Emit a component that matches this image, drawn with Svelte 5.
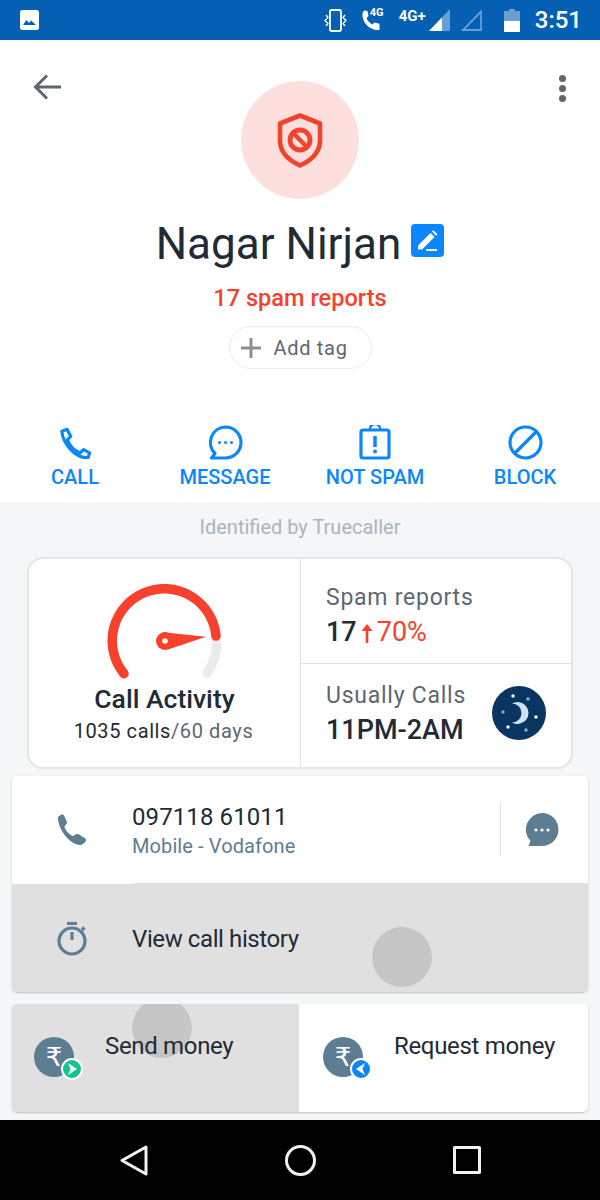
<script>
  const actions = [
    { label: 'CALL', kind: 'call' },
    { label: 'MESSAGE', kind: 'message' },
    { label: 'NOT SPAM', kind: 'spam' },
    { label: 'BLOCK', kind: 'block' }
  ];
</script>

<div class="screen">
  <header class="status">
    <svg class="st-img" width="19" height="20" viewBox="0 0 19 20"><rect width="19" height="20" rx="2.5" fill="#fff"/><path d="M3 15l3.5-5 2.5 3 2-2.5 5 4.500z" fill="#0560b4"/></svg>
    <div class="st-right">
      <svg class="st-vib" width="25" height="23" viewBox="0 0 25 23" fill="none" stroke="#fff" stroke-width="1.800"><rect x="7" y="1" width="11" height="21" rx="1.500"/><path d="M3 6l2 2.500-3 3 3 3-2 2.500M22 6l-2 2.500 3 3-3 3 2 2.500" stroke-width="1.300"/></svg>
      <span class="st-call">
        <svg width="20" height="21" viewBox="0 0 20 21"><path d="M3 0.500l3.500.500 1 5-2 2c1 3 3 5 6 6.500l2-2 5 1.200V20c-10 1-18-8-17-17z" fill="#fff"/></svg>
        <span class="st-4g">4G</span>
      </span>
      <span class="st-4gp">4G+</span>
      <svg class="st-sig1" width="21" height="22" viewBox="0 0 21 22"><path d="M21 0v22H0z" fill="#fff" opacity=".4"/><path d="M13 8.500V22H0z" fill="#fff"/></svg>
      <svg class="st-sig2" width="21" height="22" viewBox="0 0 21 22" fill="none" stroke="#fff" stroke-opacity=".4" stroke-width="1.800"><path d="M20 2.500V21H2z"/></svg>
      <svg class="st-bat" width="16" height="23" viewBox="0 0 16 23"><path d="M5 0h6v2h5v10H0V2h5z" fill="#fff" opacity=".4"/><rect y="12" width="16" height="11" fill="#fff"/></svg>
      <span class="st-time">3:51</span>
    </div>
  </header>

  <section class="hero">
    <div class="top">
      <button class="icon-btn back" aria-label="Back">
        <svg width="28" height="26" viewBox="0 0 28 26" fill="none" stroke="#5d6770" stroke-width="3"><path d="M28 13H3M14 1.500L2.500 13 14 24.500"/></svg>
      </button>
      <div class="avatar">
        <svg width="46" height="55" viewBox="0 0 46 55" fill="none" stroke="#f4432c">
          <path d="M23 2.500l20 8v17c0 12-9 20-20 25C12 47.500 3 39.500 3 27.500v-17z" stroke-width="4.600" stroke-linejoin="round"/>
          <circle cx="23" cy="27" r="10" stroke-width="4.800"/>
          <path d="M16 20l14 14" stroke-width="4.500"/>
        </svg>
      </div>
      <button class="icon-btn more" aria-label="More">
        <i></i><i></i><i></i>
      </button>
    </div>

    <div class="name-row">
      <h1>Nagar Nirjan</h1>
      <span class="edit">
        <svg width="23" height="23" viewBox="0 0 23 23"><path d="M2 16.500L14.500 4l4 4L6 20.500H2zM16 2.500l1.500-1.200 4 4-1.500 1.500z" fill="#fff"/><path d="M10 21h11" stroke="#fff" stroke-width="2"/></svg>
      </span>
    </div>
    <p class="reports">17 spam reports</p>
    <div class="pill">
      <svg width="20" height="20" viewBox="0 0 20 20"><path d="M10 0v20M0 10h20" stroke="#8b9095" stroke-width="3"/></svg>
      <span>Add tag</span>
    </div>

    <nav class="actions">
      {#each actions as a}
        <div class="action">
          <span class="action-icon">
            {#if a.kind === 'call'}
              <svg width="32" height="32" viewBox="0 0 34 34" fill="none" stroke="#0a87ff" stroke-width="3.400" stroke-linejoin="round"><path d="M3 4.500L8.500 2.500 12.500 10 9 13.500C11 19.500 16 25 22.500 27.500L26 24 32.500 27.500 31 32.500 C18 34 4 18 3 4.500z"/></svg>
            {:else if a.kind === 'message'}
              <svg width="35" height="35" viewBox="0 0 35 35" fill="none" stroke="#0a87ff" stroke-width="3.200"><path d="M17.500 2a15.500 15.500 0 1 1 0 31H3.500l3.500-4.500A15.500 15.500 0 0 1 17.500 2z" stroke-linejoin="round"/><g fill="#0a87ff" stroke="none"><circle cx="11.500" cy="17.500" r="1.500"/><circle cx="17.500" cy="17.500" r="1.500"/><circle cx="23.500" cy="17.500" r="1.500"/></g></svg>
            {:else if a.kind === 'spam'}
              <svg width="32" height="35" viewBox="0 0 32 35" fill="none" stroke="#0a87ff" stroke-width="3.200"><path d="M11 5V4a5 5 0 0 1 10 0v1" stroke-width="2.500"/><rect x="2" y="5" width="28" height="28" rx="2"/><path d="M16 11v11" stroke-width="3.500"/><circle cx="16" cy="26.500" r="2" fill="#0a87ff" stroke="none"/></svg>
            {:else}
              <svg width="35" height="35" viewBox="0 0 35 35" fill="none" stroke="#0a87ff" stroke-width="3.200"><circle cx="17.500" cy="17.500" r="15.500"/><path d="M6.500 28.500l22-22"/></svg>
            {/if}
          </span>
          <span class="action-label">{a.label}</span>
        </div>
      {/each}
    </nav>
  </section>

  <main class="body">
    <p class="identified">Identified by Truecaller</p>

    <section class="stats">
      <div class="activity">
        <svg class="gauge" width="116" height="94" viewBox="0 0 116 94" fill="none" stroke-width="9.500" stroke-linecap="round">
          <path d="M109 50A52 52 0 0 1 100 87" stroke="#ebebeb"/>
          <path d="M17 87.700A52 52 0 1 1 109 50" stroke="#f7412d"/>
          <circle cx="58" cy="55" r="9" fill="#f7412d" stroke="none"/>
          <path d="M56 46.200L99 50.700 61 63.500z" fill="#f7412d" stroke="none"/>
          <circle cx="58" cy="55" r="2.800" fill="#fff" stroke="none"/>
        </svg>
        <h2>Call Activity</h2>
        <p class="calls">1035 calls<span>/60 days</span></p>
      </div>
      <div class="side">
        <div class="cell">
          <p class="cell-label">Spam reports</p>
          <p class="cell-value">17<svg class="up" width="12" height="20" viewBox="0 0 12 20"><path d="M6 20V3" fill="none" stroke="#f7412d" stroke-width="2.600"/><path d="M.5 8L6 1l5.500 7z" fill="#f7412d"/></svg><span>70%</span></p>
        </div>
        <div class="cell night">
          <div>
            <p class="cell-label">Usually Calls</p>
            <p class="cell-value">11PM-2AM</p>
          </div>
          <svg class="moon" width="54" height="54" viewBox="0 0 54 54">
            <circle cx="27" cy="27" r="27" fill="#0b3561"/>
            <path d="M20 17.500A11 11 0 1 1 20 36.500A9.500 9.500 0 0 0 20 17.500z" fill="#cfe2f5"/>
            <g fill="#fff"><circle cx="21" cy="10" r="1.700"/><circle cx="44" cy="31" r="1.700"/><circle cx="16" cy="41" r="1.700"/></g>
            <g fill="#7fb4e6"><circle cx="36" cy="13" r="1.700"/><circle cx="11" cy="26" r="1.700"/><circle cx="34" cy="44" r="1.700"/></g>
          </svg>
        </div>
      </div>
    </section>

    <section class="list card">
      <div class="row phone-row">
        <svg class="row-icon" width="30" height="31" viewBox="0 0 30 31"><path d="M1 5C0 3 4 0 6 .500c1 .500 4 7 4 8 0 2-3 3-2.500 4.500 1 3 4 7 8 9 1.500.500 3-2.500 5-2 1.500.500 8 4 8.500 5.500.500 2-3 5.500-6 5.500C12 30 2 16 1 5z" fill="#5c7d92"/></svg>
        <div class="row-text">
          <p class="number">097118 61011</p>
          <p class="carrier">Mobile - Vodafone</p>
        </div>
        <div class="chat">
          <svg width="34" height="34" viewBox="0 0 34 34"><path d="M17 0a16.500 16.500 0 0 1 0 33H3.500l2-5A16.500 16.500 0 0 1 17 0z" fill="#5c7d92"/><g fill="#fff"><circle cx="11" cy="17" r="1.600"/><circle cx="17" cy="17" r="1.600"/><circle cx="23" cy="17" r="1.600"/></g></svg>
        </div>
      </div>
      <div class="row history-row">
        <svg class="row-icon" width="30" height="34" viewBox="0 0 30 34" fill="none" stroke="#5c7d92" stroke-width="3.200"><path d="M10 1.500h10M15 10v8M25 8l2.500-2.500"/><circle cx="15" cy="19" r="13"/></svg>
        <p class="row-title">View call history</p>
        <span class="ripple history-ripple"></span>
      </div>
    </section>

    <section class="money card">
      <div class="pay send">
        <span class="ripple send-ripple"></span>
        <span class="coin">₹
          <span class="badge green"><svg width="10" height="12" viewBox="0 0 10 12"><path d="M1 0l9 6-9 6 2.500-6z" fill="#fff"/></svg></span>
        </span>
        <span class="pay-label">Send money</span>
      </div>
      <div class="pay request">
        <span class="coin">₹
          <span class="badge blue"><svg width="10" height="12" viewBox="0 0 10 12"><path d="M9 0L0 6l9 6-2.500-6z" fill="#fff"/></svg></span>
        </span>
        <span class="pay-label">Request money</span>
      </div>
    </section>
  </main>

  <footer class="nav">
    <svg width="28" height="31" viewBox="0 0 28 31" fill="none" stroke="#f2f2f2" stroke-width="3" stroke-linejoin="round"><path d="M26 2L2 15.500 26 29z"/></svg>
    <svg width="31" height="31" viewBox="0 0 31 31" fill="none" stroke="#f2f2f2" stroke-width="3"><circle cx="15.500" cy="15.500" r="14"/></svg>
    <svg width="28" height="28" viewBox="0 0 28 28" fill="none" stroke="#f2f2f2" stroke-width="3" stroke-linejoin="round"><rect x="1.500" y="1.500" width="25" height="25"/></svg>
  </footer>
</div>

<style>
  :global(body) { margin: 0; background: #f4f6f8; }
  * { box-sizing: border-box; }
  p, h1, h2 { margin: 0; font-weight: 400; }
  .screen {
    width: 600px; height: 1200px; display: flex; flex-direction: column; overflow: hidden;
    font-family: Roboto, "Liberation Sans", sans-serif; color: #212b36; background: #f4f6f8;
  }

  .status {
    height: 40px; flex: none; background: #0560b4; color: #fff;
    display: flex; align-items: center; justify-content: space-between; padding: 0 18px 0 20px;
  }
  .st-right { display: flex; align-items: center; }
  .st-vib { margin-right: 13px; }
  .st-call { position: relative; display: block; width: 22px; height: 21px; margin-right: 16px; }
  .st-call svg { display: block; }
  .st-4g { position: absolute; left: 9px; top: -3px; font-size: 11px; font-weight: 700; line-height: 12px; }
  .st-4gp { font-size: 15px; font-weight: 700; width: 30px; margin-top: -8px; white-space: nowrap; }
  .st-sig2 { margin-left: 11px; }
  .st-bat { margin-left: 22px; }
  .st-time { margin-left: 15px; font-size: 24px; font-weight: 500; line-height: 30px; }

  .hero {
    height: 462px; flex: none; background: #fff; padding-top: 33px;
    display: flex; flex-direction: column; align-items: center;
  }
  .top { width: 100%; display: grid; grid-template-columns: 1fr 118px 1fr; padding: 0 33px; }
  .icon-btn { border: 0; background: none; padding: 0; display: block; height: 27px; }
  .back { justify-self: start; }
  .back svg { display: block; }
  .more { justify-self: end; width: 8px; padding-top: 2px; display: flex; flex-direction: column; gap: 3px; height: auto; align-self: start; }
  .more i { width: 7px; height: 7px; border-radius: 50%; background: #5d6770; display: block; }
  .avatar {
    width: 118px; height: 118px; margin-top: 8px; border-radius: 50%; background: #fde0dd;
    display: flex; align-items: center; justify-content: center;
  }

  .name-row { display: flex; align-items: center; gap: 10px; margin-top: 20px; height: 48px; }
  h1 { font-size: 44px; line-height: 48px; padding-top: 1px; color: #212b36; }
  .edit {
    width: 33px; height: 33px; border-radius: 4px; background: #0a87ff; margin-top: -5px;
    display: flex; align-items: center; justify-content: center;
  }
  .reports { margin-top: 17px; font-size: 23.6px; line-height: 28px; font-weight: 500; color: #f7412d; }
  .pill {
    margin-top: 14px; width: 143px; height: 43px; border: 1px solid #ececec; border-radius: 22px;
    display: flex; align-items: center; gap: 13px; padding-left: 11px;
    font-size: 20px; letter-spacing: .7px; color: #5d6770;
  }
  .actions { margin-top: 56px; width: 100%; display: grid; grid-template-columns: repeat(4, 150px); }
  .action { display: flex; flex-direction: column; align-items: center; }
  .action-icon { height: 35px; display: flex; align-items: center; justify-content: center; }
  .action-icon svg { display: block; }
  .action-label { margin-top: 4px; font-size: 20px; line-height: 26px; font-weight: 500; color: #0a87ff; }

  .body { flex: 1; padding: 0 12px; display: flex; flex-direction: column; }
  .identified { margin-top: 13px; height: 42px; text-align: center; font-size: 20px; line-height: 24px; color: #aab5bd; }

  .stats {
    margin: 0 15px; height: 212px; flex: none; display: grid; grid-template-columns: 272px 1fr;
    background: #fff; border: 2px solid #e3e5e8; border-radius: 16px;
  }
  .activity { border-right: 1px solid #dfe1e3; display: flex; flex-direction: column; align-items: center; padding-top: 27px; }
  .gauge { display: block; overflow: visible; flex: none; }
  h2 { margin-top: 4px; font-size: 26.500px; line-height: 30px; font-weight: 500; color: #212b36; }
  .calls { margin-top: 4px; font-size: 20px; line-height: 26px; letter-spacing: .6px; color: #212b36; margin-left: -2px; }
  .calls span { color: #5d6770; }
  .side { display: grid; grid-template-rows: 104px 1fr; }
  .cell { padding: 24px 0 0 25px; }
  .cell + .cell { border-top: 1px solid #dfe1e3; }
  .cell-label { font-size: 23px; line-height: 30px; letter-spacing: .75px; color: #5d6770; }
  .cell-value { margin-top: 3px; font-size: 27px; line-height: 33px; font-weight: 500; color: #212b36; display: flex; align-items: center; }
  .cell-value span { font-weight: 400; color: #f7412d; }
  .up { margin: 0 4px 0 4px; }
  .night { display: flex; align-items: flex-start; justify-content: space-between; padding-top: 17px; padding-right: 25px; }
  .moon { margin-top: 5px; display: block; }

  .card { box-shadow: 0 1px 2px rgba(0,0,0,.22); border-radius: 5px; overflow: hidden; flex: none; }
  .list { margin-top: 7px; height: 216px; background: #fff; }
  .row { display: flex; align-items: center; position: relative; }
  .row-icon { margin-left: 45px; flex: none; display: block; }
  .phone-row { height: 107px; }
  .row-text { margin-left: 45px; flex: 1; padding-top: 2px; }
  .number { font-size: 24px; line-height: 30px; letter-spacing: .1px; color: #212b36; }
  .carrier { font-size: 20px; line-height: 28px; letter-spacing: .1px; color: #5c7d92; }
  .chat { width: 88px; height: 53px; border-left: 1px solid #e2e2e2; display: flex; align-items: center; justify-content: center; flex: none; padding-right: 5px; }
  .chat svg { display: block; }
  .history-row { height: 109px; background: #e0e0e0; padding-top: 2px; }
  .history-row::before { content: ""; position: absolute; left: 0; top: 0; width: 120px; height: 1px; background: #fff; }
  .row-title { margin-left: 45px; font-size: 24px; letter-spacing: -.4px; color: #212b36; }

  .ripple { position: absolute; border-radius: 50%; background: #c6c6c6; width: 60px; height: 60px; }
  .history-ripple { left: 360px; top: 44px; }

  .money { margin-top: 12px; height: 108px; display: grid; grid-template-columns: 287px 1fr; background: #fff; }
  .pay { position: relative; display: flex; align-items: flex-start; padding: 33px 0 0 22px; overflow: hidden; }
  .send { background: #e0e0e0; }
  .send-ripple { left: 120px; top: -6px; }
  .coin {
    position: relative; width: 40px; height: 40px; border-radius: 50%; background: #5c7d92; color: #fff; flex: none;
    font-size: 26px; line-height: 40px; text-align: center; font-family: "DejaVu Sans", sans-serif;
  }
  .request { padding-left: 24px; }
  .badge {
    position: absolute; left: 27px; top: 21px; width: 22px; height: 22px; border-radius: 50%; border: 2px solid #fff;
    display: flex; align-items: center; justify-content: center;
  }
  .badge svg { display: block; }
  .green { background: #14c38e; }
  .blue { background: #0a87ff; }
  .pay-label { position: relative; margin-left: 31px; margin-top: -6px; font-size: 24px; line-height: 30px; letter-spacing: -.33px; color: #212b36; white-space: nowrap; }

  .nav {
    height: 80px; flex: none; margin-top: auto; background: #000;
    display: grid; grid-template-columns: repeat(3, 166.5px); justify-content: center; justify-items: center; align-items: center;
  }
</style>
